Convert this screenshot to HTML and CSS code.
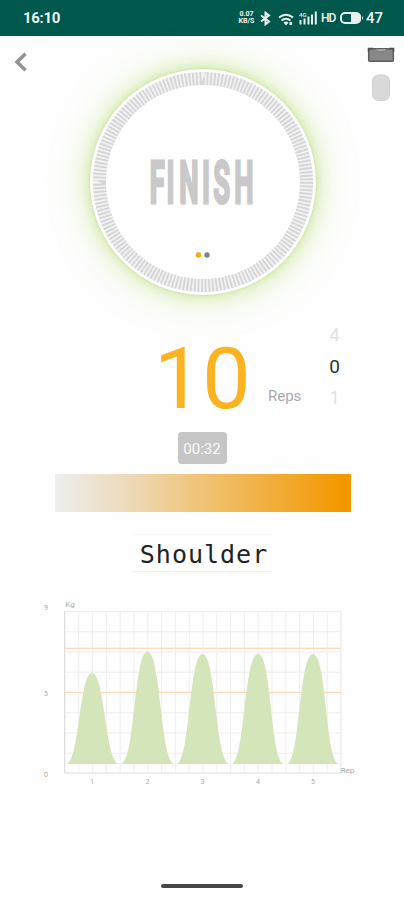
FILE: index.html
```html
<!DOCTYPE html>
<html lang="en">
<head>
<title>Workout</title>
<meta charset="utf-8">
<link rel="stylesheet" href="styles.css">
</head>
<body>
<div class="status">
	<span class="clock">16:10</span>
	<span class="speed">0.07<br>KB/S</span>
	<svg class="bt" width="11" height="15" viewBox="0 0 11 15"><path d="M1 4.500l8 6-3.500 2.800V1.700L9 4.500l-8 6"/></svg>
	<svg class="wifi" width="16" height="13" viewBox="0 0 16 13"><path d="M1 4.500q7-5.500 14 0M3.500 7.500q4.500-3.500 9 0"/><path class="solid" d="M5.500 9.500q2.500-2 5 0L8 12.500zM11.500 9h2.500v3h-2.500z"/></svg>
	<svg class="signal" width="18" height="14" viewBox="0 0 18 14"><path d="M1.500 9v4.500M5.500 7.500v6M9.500 5.500v8M13 3.500v10M16.800 .5v13"/><text x="0" y="6">4G</text></svg>
	<span class="hd">HD</span>
	<svg class="battery" width="24" height="12" viewBox="0 0 24 12"><rect x="1" y="1" width="19" height="10" rx="4"/><path class="solid" d="M11 1h6a4 4 0 0 1 4 4v2a4 4 0 0 1-4 4h-6zM22 4q2 2 0 4z"/></svg>
	<span class="level">47</span>
</div>

<div class="top">
	<svg class="back" width="14" height="20" viewBox="0 0 14 20"><path d="M11.500 1.800L3 10l8.500 8.200"/></svg>
	<div class="dial">
		<svg width="224" height="224" viewBox="0 0 224 224">
			<circle class="track" cx="112" cy="112" r="103.500"/>
			<circle class="ticks" cx="112" cy="112" r="103.500" pathLength="720"/>
			<text class="finish" y="133.500" x="129 166 194 244 268.500 315" transform="scale(.455 1)">FINISH</text>
			<circle class="dot on" cx="107.500" cy="185" r="2.800"/>
			<circle class="dot" cx="116" cy="185" r="2.700"/>
		</svg>
	</div>
	<div class="devices">
		<svg width="28" height="16" viewBox="0 0 28 16"><rect class="box" x="1.700" y="1.700" width="24.600" height="12.600" rx="1"/><path class="notch" d="M8.500 2.300q1 2.700 5.500 2.700t5.500-2.700"/><path class="corners" d="M1.500 5V1.500H6M22 1.500h4.500V5"/></svg>
		<svg width="20" height="28" viewBox="0 0 20 28"><rect class="pod" x="1.500" y="1" width="17" height="25.500" rx="6"/></svg>
	</div>
</div>

<div class="count">
	<span class="number">10</span>
	<span class="unit">Reps</span>
	<div class="picker">
		<span>4</span>
		<span class="current">0</span>
		<span>1</span>
	</div>
</div>

<div class="timer">00:32</div>
<div class="power"></div>
<div class="muscle">Shoulder</div>

<svg class="chart" width="330" height="196" viewBox="38 598 330 196">
	<defs>
		<pattern id="grid" x="64.500" y="611" width="13.800" height="20.250" patternUnits="userSpaceOnUse">
			<path class="grid" d="M.5 0v20.250M0 .5h13.800"/>
		</pattern>
	</defs>
	<rect x="64" y="611" width="277" height="162" fill="url(#grid)"/>
	<path class="frame" d="M341 773V611"/>
	<path class="axis" d="M64.500 611v162H341"/>
	<path class="limit" d="M65 648.300h276M65 692.300h276"/>
	<g class="reps">
		<path d="M66 764C80 762 79 673 92 673S105 762 119 764z"/>
		<path d="M121 764C135 762 134 651.500 147.500 651.500S160 762 174.500 764z"/>
		<path d="M176.500 764C190 762 189 654 202.500 654S215 762 229.500 764z"/>
		<path d="M231.500 764C245 762 244 654 258 654S270 762 284 764z"/>
		<path d="M287 764C300 762 299 654 313 654S325 762 339 764z"/>
	</g>
	<g class="labels">
		<text x="46" y="610">9</text>
		<text x="46" y="696">5</text>
		<text x="46" y="777">0</text>
		<text x="70" y="607" class="name">Kg</text>
		<text x="347.500" y="773" class="name">Rep</text>
		<text x="92" y="784">1</text>
		<text x="147.500" y="784">2</text>
		<text x="202.500" y="784">3</text>
		<text x="258" y="784">4</text>
		<text x="313" y="784">5</text>
	</g>
</svg>

<div class="home"></div>
</body>
</html>
```
FILE: styles.css
```css
body {
	width: 404px;
	height: 900px;
	margin: 0;
	overflow: hidden;
	display: flex;
	flex-direction: column;
	align-items: center;
	background: #fefefe;
	font-family: Roboto, sans-serif;
}
svg {
	display: block;
	fill: none;
}
.status {
	box-sizing: border-box;
	width: 404px;
	height: 36px;
	padding: 0 21px 0 23px;
	display: flex;
	align-items: center;
	flex: none;
	background: #00574b;
	color: #f0f5f4;
	font-size: 15px;
	font-weight: 500;
}
.status svg {
	stroke: #e8f0ee;
	stroke-width: 2;
}
.status .solid {
	fill: #e8f0ee;
	stroke: none;
}
.clock {
	flex: 1;
	font-weight: 700;
	letter-spacing: -.3px;
}
.speed {
	width: 17px;
	margin-right: 5px;
	font-size: 7px;
	line-height: 7px;
	font-weight: 700;
	text-align: center;
}
.wifi {
	margin: 2px 5px 0 7px;
}
.signal text {
	fill: #e8f0ee;
	stroke: none;
	font-size: 6px;
}
.hd {
	width: 19px;
	margin-left: 4px;
	font-size: 12px;
	letter-spacing: -1px;
}
.level {
	margin-left: 2px;
	font-size: 15px;
}
.top {
	width: 404px;
	height: 274px;
	display: grid;
	grid-template-columns: 90px 226px 88px;
	flex: none;
}
.back {
	margin: 16px 0 0 14px;
	stroke: #929292;
	stroke-width: 3.5;
}
.dial {
	width: 224px;
	height: 224px;
	margin: 34px 0 0 1px;
	border-radius: 50%;
	background: #fff;
	box-shadow: 0 0 0 1px #fff, 0 0 2px 1px #b9da80, 0 0 12px 1px rgba(174, 214, 98, .45), 0 0 34px 4px rgba(185, 220, 125, .55);
}
.track {
	stroke: #f2f2f2;
	stroke-width: 13;
}
.ticks {
	stroke: #d6d6d8;
	stroke-width: 13;
	stroke-dasharray: 2.1 1.9;
}
.finish {
	fill: #c9c9c9;
	stroke: #c9c9c9;
	stroke-width: 3;
	font-size: 60px;
	font-weight: 700;
}
.dot {
	fill: #818181;
}
.dot.on {
	fill: #f5ac16;
}
.devices {
	padding: 11px 9px 0 0;
	display: flex;
	flex-direction: column;
	align-items: flex-end;
	gap: 11px;
}
.devices svg:last-child {
	margin-right: 4px;
}
.box {
	fill: #888;
	stroke: #5d5d5d;
	stroke-width: 1.5;
}
.notch {
	fill: #aaa;
	stroke: #777;
}
.corners {
	stroke: #505050;
	stroke-width: 1.5;
}
.pod {
	fill: #d9d9d9;
	stroke: #cfcfcf;
}
.count {
	width: 404px;
	height: 122px;
	display: grid;
	grid-template-columns: 154px 114px 54px 25px;
	flex: none;
}
.number {
	grid-column: 2;
	padding-top: 17px;
	color: #fcb322;
	font-size: 86px;
	line-height: 103px;
}
.unit {
	padding-top: 76px;
	color: #aaa;
	font-size: 15px;
	line-height: 20px;
}
.picker {
	padding-top: 9px;
	display: flex;
	flex-direction: column;
	align-items: center;
	color: #e2e2e2;
	font-size: 18px;
	line-height: 31.5px;
}
.picker .current {
	color: #333;
	font-size: 19px;
}
.timer {
	width: 49px;
	height: 32px;
	border-radius: 4px;
	background: #c6c6c6;
	color: #fafafa;
	font-size: 15px;
	line-height: 34px;
	text-align: center;
	flex: none;
}
.power {
	width: 296px;
	height: 38px;
	margin: 10px 0 22px 2px;
	background: linear-gradient(90deg, #eee, #edd9b8 25%, #f0be68 55%, #f39800 97%);
	flex: none;
}
.muscle {
	box-sizing: border-box;
	width: 139px;
	height: 38px;
	padding-left: 4px;
	border-top: 1px solid #f6f6f6;
	border-bottom: 1px solid #f2f2f2;
	color: #222;
	font-family: "DejaVu Sans Mono", monospace;
	font-size: 25px;
	letter-spacing: 1px;
	line-height: 40px;
	text-align: center;
	flex: none;
}
.chart {
	margin: 26px 0 0 2px;
	flex: none;
}
.grid {
	stroke: #eee;
}
.frame {
	stroke: #eaeaea;
}
.axis {
	stroke: #dcdcdc;
}
.limit {
	stroke: #fbd9bb;
	stroke-width: 1.3;
}
.reps {
	fill: #d4e5ba;
}
.labels {
	fill: #aaa;
	font-size: 7px;
	text-anchor: middle;
}
.name {
	font-size: 8px;
}
.home {
	width: 82px;
	height: 4px;
	margin-top: 90px;
	border-radius: 2px;
	background: #484848;
	flex: none;
}
```
